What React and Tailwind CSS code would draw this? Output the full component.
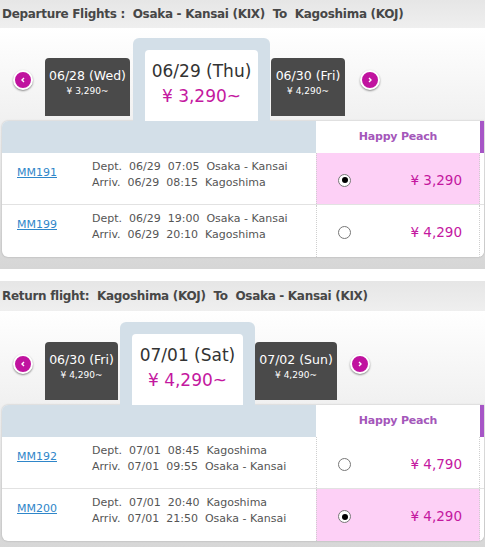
import React from 'react'

const sections = [
  {
    title: 'Departure Flights :  Osaka - Kansai (KIX)  To  Kagoshima (KOJ)',
    headH: 'h-[28px]',
    bodyPt: 'pt-[10px]',
    prev: { date: '06/28 (Wed)', price: '¥ 3,290~', w: 'w-[85px]', ml: 'ml-[12px]' },
    current: { date: '06/29 (Thu)', price: '¥ 3,290~', w: 'w-[137px]', ml: 'ml-[3px]' },
    next: { date: '06/30 (Fri)', price: '¥ 4,290~', w: 'w-[74px]', ml: 'ml-[1px]' },
    nextGap: 'ml-[15px]',
    flights: [
      { no: 'MM191', dep: 'Dept.  06/29  07:05  Osaka - Kansai', arr: 'Arriv.  06/29  08:15  Kagoshima', price: '¥ 3,290', checked: true },
      { no: 'MM199', dep: 'Dept.  06/29  19:00  Osaka - Kansai', arr: 'Arriv.  06/29  20:10  Kagoshima', price: '¥ 4,290', checked: false },
    ],
  },
  {
    title: 'Return flight:  Kagoshima (KOJ)  To  Osaka - Kansai (KIX)',
    headH: 'h-[30px]',
    bodyPt: 'pt-[11px]',
    prev: { date: '06/30 (Fri)', price: '¥ 4,290~', w: 'w-[73px]', ml: 'ml-[12px]' },
    current: { date: '07/01 (Sat)', price: '¥ 4,290~', w: 'w-[135px]', ml: 'ml-[2px]' },
    next: { date: '07/02 (Sun)', price: '¥ 4,290~', w: 'w-[82px]', ml: 'ml-0' },
    nextGap: 'ml-[13px]',
    flights: [
      { no: 'MM192', dep: 'Dept.  07/01  08:45  Kagoshima', arr: 'Arriv.  07/01  09:55  Osaka - Kansai', price: '¥ 4,790', checked: false },
      { no: 'MM200', dep: 'Dept.  07/01  20:40  Kagoshima', arr: 'Arriv.  07/01  21:50  Osaka - Kansai', price: '¥ 4,290', checked: true },
    ],
  },
]

const Arrow = ({ dir }) => (
  <div className='w-[20px] h-[20px] rounded-full bg-[#c0139f] border-2 border-white shadow-[0_1px_2px_rgba(0,0,0,0.45)] flex items-center justify-center'>
    <svg width='6' height='6' viewBox='0 0 6 6'>
      {dir === 'left'
        ? <path d='M4 1 L2 3 L4 5' stroke='white' strokeWidth='1.4' fill='none' />
        : <path d='M2 1 L4 3 L2 5' stroke='white' strokeWidth='1.4' fill='none' />}
    </svg>
  </div>
)

const DayTab = ({ d }) => (
  <div className={`${d.w} ${d.ml} h-[58px] mb-[5px] bg-[#4a4a4a] rounded-t-[4px] flex flex-col items-center pt-[9px] text-white`}>
    <p className='text-[12.5px] leading-[17px]'>{d.date}</p>
    <p className='text-[9px] leading-[13px] mt-[1px]'>{d.price}</p>
  </div>
)

const CurrentTab = ({ d }) => (
  <div className={`${d.w} ${d.ml} h-[83px] bg-[#d3dfe8] rounded-t-[6px] px-[12px] pt-[12px]`}>
    <div className='h-full bg-white rounded-t-[4px] flex flex-col items-center pt-[10px]'>
      <p className='text-[17px] leading-[22px] text-[#333]'>{d.date}</p>
      <p className='text-[17px] leading-[22px] text-[#c4189f] mt-[3px]'>{d.price}</p>
    </div>
  </div>
)

const Radio = ({ checked }) => (
  <div className='w-[13px] h-[13px] rounded-full border border-[#777] bg-white flex items-center justify-center'>
    {checked && <div className='w-[6px] h-[6px] rounded-full bg-black'></div>}
  </div>
)

const FlightRow = ({ f, last }) => (
  <div className={`grid grid-cols-[90px_224px_164px_4px] h-[52px] ${last ? '' : 'border-b border-[#e2e2e2]'}`}>
    <div className='pl-[15px] pt-[6px]'>
      <a className='text-[11px] leading-[16px] text-[#2f86c9] underline'>{f.no}</a>
    </div>
    <div className='pt-[6px] text-[11px] leading-[16px] text-[#555] whitespace-pre'>
      <p>{f.dep}</p>
      <p>{f.arr}</p>
    </div>
    <div className={`flex items-center justify-between pl-[21px] pr-[17px] pt-[3px] border-x border-dotted border-[#cfcfcf] ${f.checked ? 'bg-[#fdd0f6]' : 'bg-white'}`}>
      <Radio checked={f.checked} />
      <span className='text-[13.5px] text-[#c4189f]'>{f.price}</span>
    </div>
    <div className='bg-white'></div>
  </div>
)

const Section = ({ s }) => (
  <div className='mb-[12px]'>
    <div className={`${s.headH} bg-gradient-to-b from-[#e6e6e6] to-[#efefef] flex items-center pl-[2px]`}>
      <p className='text-[12px] tracking-[-0.3px] font-bold text-[#474747] whitespace-pre'>{s.title}</p>
    </div>
    <div className={`${s.bodyPt} pb-[12px] bg-gradient-to-b from-[#ffffff] via-[#ececec] to-[#d6d6d6]`}>
      <div className='flex items-end h-[83px]'>
        <div className='self-center pl-[13px]'>
          <Arrow dir='left' />
        </div>
        <DayTab d={s.prev} />
        <CurrentTab d={s.current} />
        <DayTab d={s.next} />
        <div className={`self-center ${s.nextGap}`}>
          <Arrow dir='right' />
        </div>
      </div>
      <div className='mx-[2px] w-[482px] bg-white rounded-b-[6px] rounded-tl-[6px] shadow-[0_0_2px_rgba(0,0,0,0.25)] overflow-hidden'>
        <div className='grid grid-cols-[314px_164px_4px] h-[32px]'>
          <div className='bg-[#d3dfe8]'></div>
          <div className='bg-white flex items-center justify-center text-[11px] tracking-[-0.2px] font-bold text-[#a457ba]'>Happy Peach</div>
          <div className='bg-[#a655c6]'></div>
        </div>
        {s.flights.map((f, i) => (
          <FlightRow key={f.no} f={f} last={i === s.flights.length - 1} />
        ))}
      </div>
    </div>
  </div>
)

export default function App() {
  return (
    <div className="w-[485px] h-[547px] overflow-hidden bg-white font-['DejaVu_Sans',sans-serif]">
      {sections.map(s => (
        <Section key={s.title} s={s} />
      ))}
    </div>
  )
}
